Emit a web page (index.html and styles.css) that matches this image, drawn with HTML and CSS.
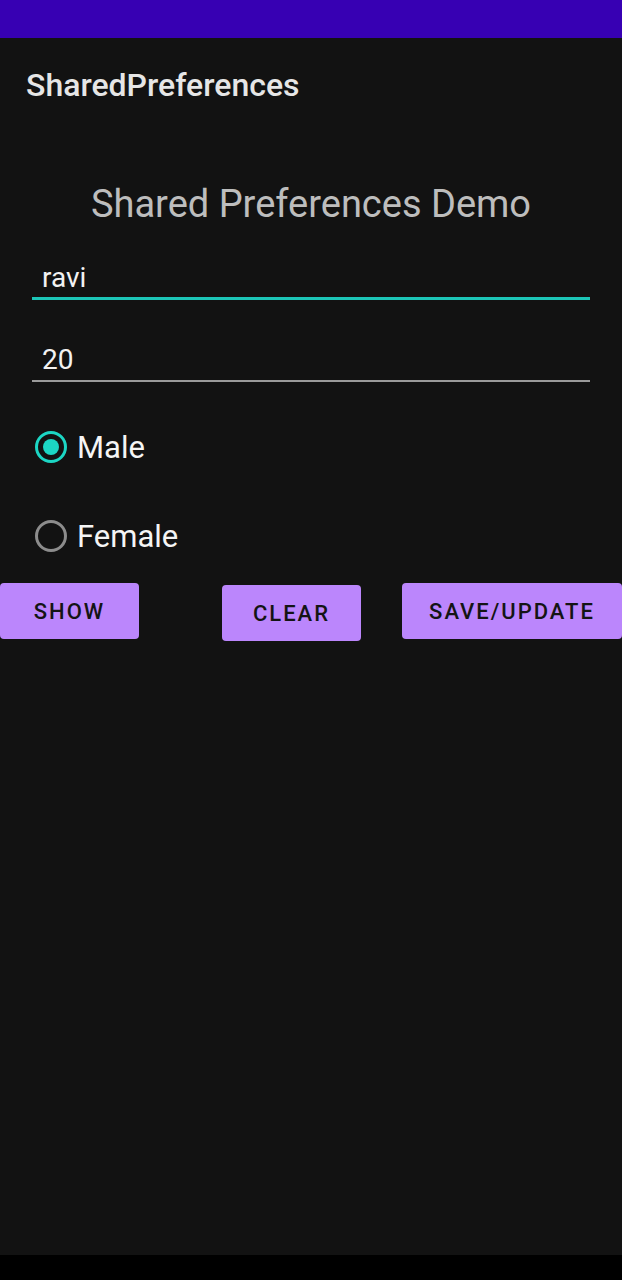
FILE: index.html
```html
<!DOCTYPE html>
<html>
<head>
<meta charset="utf-8">
<link rel="stylesheet" href="styles.css">
</head>
<body>
<div class="screen">
  <div class="status-bar"></div>
  <header class="toolbar"><span class="toolbar-title">SharedPreferences</span></header>
  <main class="content">
    <h1 class="demo-title">Shared Preferences Demo</h1>
    <div class="field field-focused"><span class="field-text">ravi</span></div>
    <div class="field field-plain"><span class="field-text">20</span></div>
    <div class="radio-row radio-first">
      <span class="radio radio-checked"><span class="radio-dot"></span></span>
      <span class="radio-label">Male</span>
    </div>
    <div class="radio-row">
      <span class="radio"></span>
      <span class="radio-label">Female</span>
    </div>
    <div class="button-row">
      <button class="btn btn-show">SHOW</button>
      <button class="btn btn-clear">CLEAR</button>
      <button class="btn btn-save">SAVE/UPDATE</button>
    </div>
  </main>
  <div class="nav-bar"></div>
</div>
</body>
</html>
```

FILE: styles.css
```css
* { box-sizing: border-box; }
html, body { margin: 0; padding: 0; }
body {
  background: #121212;
  font-family: Roboto, "Liberation Sans", sans-serif;
}
.screen {
  width: 622px;
  height: 1280px;
  display: flex;
  flex-direction: column;
  background: #121212;
}
.status-bar {
  height: 38px;
  background: #3700b3;
  flex: none;
}
.toolbar {
  height: 96px;
  display: flex;
  align-items: center;
  padding-left: 26px;
  flex: none;
}
.toolbar-title {
  color: #e6e6e6;
  font-size: 32px;
  font-weight: 500;
  margin-top: -3px;
}
.content {
  flex: 1;
  display: flex;
  flex-direction: column;
}
.demo-title {
  margin: 48px 0 0 0;
  text-align: center;
  font-size: 38px;
  font-weight: 400;
  color: #bdbdbd;
  line-height: 44px;
}
.field {
  margin: 0 32px;
  display: flex;
  align-items: flex-end;
  padding-left: 10px;
}
.field-focused {
  margin-top: 3px;
  height: 71px;
  border-bottom: 3px solid #1cc5b7;
  padding-bottom: 3px;
}
.field-plain {
  margin-top: 16px;
  height: 66px;
  border-bottom: 2px solid #9a9a9a;
  padding-bottom: 4px;
}
.field-text {
  color: #f2f2f2;
  font-size: 28px;
  line-height: 32px;
}
.radio-row {
  display: flex;
  align-items: center;
  padding-left: 35px;
  height: 89px;
}
.radio-first { margin-top: 20px; }
.radio {
  width: 32px;
  height: 32px;
  border-radius: 50%;
  border: 3px solid #8c8c8c;
  display: flex;
  align-items: center;
  justify-content: center;
  flex: none;
}
.radio-checked { border-color: #1cd6c4; }
.radio-dot {
  width: 16px;
  height: 16px;
  border-radius: 50%;
  background: #1cd6c4;
}
.radio-label {
  margin-left: 10px;
  color: #f5f5f5;
  font-size: 31px;
  margin-top: 2px;
}
.button-row {
  display: flex;
  align-items: flex-start;
  margin-top: 3px;
}
.btn {
  background: #bb86fc;
  border: none;
  border-radius: 4px;
  height: 56px;
  font-family: Roboto, "Liberation Sans", sans-serif;
  font-size: 22px;
  font-weight: 500;
  letter-spacing: 2px;
  color: #141414;
  padding: 0;
}
.btn-show { width: 139px; }
.btn-clear { width: 139px; margin-top: 2px; margin-left: 83px; }
.btn-save { width: 220px; margin-left: 41px; }
.nav-bar {
  height: 25px;
  background: #000;
  flex: none;
}
```
